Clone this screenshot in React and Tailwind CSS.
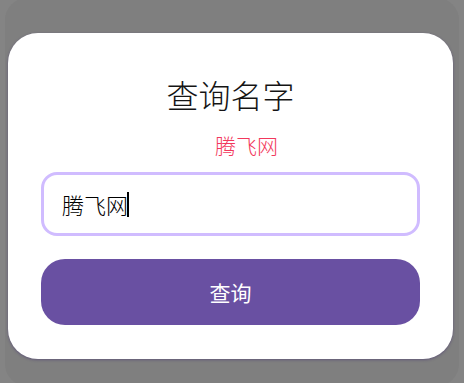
export default function App() {
  const font = { fontFamily: '"Noto Sans CJK SC", "Noto Sans", sans-serif' };
  return (
    <div className="w-[464px] h-[383px] bg-[#848484] px-[5px] overflow-hidden" style={font}>
      <div className="h-[388px] -mt-[2px] rounded-[22px] bg-[#7f7f7f] pt-[35px] pl-[3px] pr-[4px]">
        <div className="w-[445px] h-[326px] bg-white rounded-[30px] shadow-[0_1px_3px_rgba(60,40,110,0.45)] px-[33px] pt-[42px] flex flex-col">
          <div className="text-center text-[32px] leading-[38px] font-light text-[#141414]">查询名字</div>
          <div className="mt-[18px] text-center pl-[32px] text-[21px] leading-[28px] font-light text-[#f2385c]">腾飞网</div>
          <div className="mt-[13px] h-[64px] rounded-[16px] border-[3px] border-[#d0bcff] flex items-center pl-[18px]">
            <span className="text-[22px] leading-[28px] font-light text-black">腾飞网</span>
            <span className="w-[1.5px] h-[25px] bg-black -ml-[1px]" />
          </div>
          <div className="mt-[23px] h-[66px] rounded-[24px] bg-[#6950a2] flex items-center justify-center">
            <span className="text-[21px] leading-[28px] font-normal text-white">查询</span>
          </div>
        </div>
      </div>
    </div>
  );
}
